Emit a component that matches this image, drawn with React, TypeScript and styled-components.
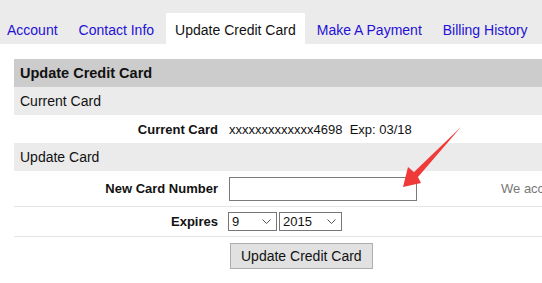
import React from "react";
import styled, { createGlobalStyle } from "styled-components";

const Global = createGlobalStyle`
  html, body {
    margin: 0;
    padding: 0;
    overflow: hidden;
    background: #ffffff;
    font-family: Arial, "Liberation Sans", Helvetica, sans-serif;
    color: #111;
  }
`;

const Page = styled.div`
  position: relative;
  width: 542px;
  height: 283px;
  overflow: hidden;
`;

const TabBar = styled.div`
  display: flex;
  align-items: flex-end;
  gap: 3px;
  height: 44px;
  background: #ebebeb;
  padding-left: 0;
  margin-left: -2px;
  white-space: nowrap;
`;

const Tab = styled.a<{ $active?: boolean }>`
  display: block;
  padding: 9px 9px 6px;
  font-size: 14px;
  line-height: 16px;
  text-decoration: none;
  color: ${(p) => (p.$active ? "#111" : "#2410d6")};
  background: ${(p) => (p.$active ? "#ffffff" : "transparent")};
  cursor: pointer;
`;

const Panel = styled.div`
  margin: 15px 0 0 14px;
  width: 640px;
`;

const Header = styled.div`
  height: 28px;
  display: flex;
  align-items: center;
  padding-left: 6px;
  background: #cccccc;
  font-weight: bold;
  font-size: 14.5px;
`;

const Section = styled.div`
  height: 28px;
  display: flex;
  align-items: center;
  padding-left: 6px;
  background: #ebebeb;
  font-size: 14px;
`;

const Field = styled.div<{ $h: number; $line?: boolean }>`
  display: grid;
  grid-template-columns: 210px 272px 1fr;
  align-items: center;
  height: ${(p) => p.$h}px;
  border-bottom: ${(p) => (p.$line ? "1px solid #e4e4e4" : "none")};
  font-size: 13px;
`;

const Label = styled.div`
  text-align: right;
  padding-right: 6px;
  font-weight: bold;
  font-size: 13px;
`;

const Value = styled.div`
  padding-left: 5px;
  display: flex;
  align-items: center;
  white-space: nowrap;
`;

const Note = styled.div`
  padding-left: 5px;
  color: #777;
  font-size: 13px;
  white-space: nowrap;
`;

const TextInput = styled.input`
  box-sizing: border-box;
  width: 188px;
  height: 24px;
  border: 1px solid #7a7a7a;
  padding: 0 3px;
  font: 13px Arial, "Liberation Sans", sans-serif;
  outline: none;
  margin: 0;
`;

const SelectWrap = styled.span<{ $w: number }>`
  position: relative;
  display: inline-block;
  width: ${(p) => p.$w}px;
  height: 19px;
  margin-right: 2px;
  &:first-child {
    margin-left: -1px;
  }
`;

const Select = styled.select`
  appearance: none;
  -webkit-appearance: none;
  box-sizing: border-box;
  width: 100%;
  height: 100%;
  border: 1px solid #767676;
  border-radius: 0;
  background: #fff;
  padding: 0 0 0 3px;
  margin: 0;
  font: 13px Arial, "Liberation Sans", sans-serif;
  color: #111;
  outline: none;
`;

const Chevron = styled.svg`
  position: absolute;
  right: 6px;
  top: 7px;
  pointer-events: none;
`;

const ButtonRow = styled.div`
  display: grid;
  grid-template-columns: 216px auto;
  padding-top: 6px;
`;

const Button = styled.button`
  grid-column: 2;
  justify-self: start;
  box-sizing: border-box;
  height: 26px;
  padding: 0 10px;
  background: #e1e1e1;
  border: 1px solid #adadad;
  border-radius: 0;
  font: 14px Arial, "Liberation Sans", sans-serif;
  color: #111;
  margin: 0;
`;

const Arrow = styled.svg`
  position: absolute;
  left: 0;
  top: 0;
  pointer-events: none;
`;

const ChevronIcon = () => (
  <Chevron width="9" height="5" viewBox="0 0 9 5">
    <path d="M0.5 0.5 L4.5 4.5 L8.5 0.5" fill="none" stroke="#555" strokeWidth="1" />
  </Chevron>
);

const tabs = ["Account", "Contact Info", "Update Credit Card", "Make A Payment", "Billing History"];

export default function App() {
  return (
    <Page>
      <Global />
      <TabBar>
        {tabs.map((t) => (
          <Tab key={t} $active={t === "Update Credit Card"}>
            {t}
          </Tab>
        ))}
      </TabBar>
      <Panel>
        <Header>Update Credit Card</Header>
        <Section>Current Card</Section>
        <Field $h={28}>
          <Label>Current Card</Label>
          <Value>xxxxxxxxxxxxx4698&nbsp;&nbsp;Exp: 03/18</Value>
        </Field>
        <Section>Update Card</Section>
        <Field $h={35} $line>
          <Label>New Card Number</Label>
          <Value>
            <TextInput type="text" />
          </Value>
          <Note>We accept Visa, MasterCard, Discover and American Express</Note>
        </Field>
        <Field $h={29} $line>
          <Label>Expires</Label>
          <Value>
            <SelectWrap $w={49}>
              <Select defaultValue="9">
                {Array.from({ length: 12 }, (_, i) => (
                  <option key={i} value={String(i + 1)}>
                    {i + 1}
                  </option>
                ))}
              </Select>
              <ChevronIcon />
            </SelectWrap>
            <SelectWrap $w={63}>
              <Select defaultValue="2015">
                {[2015, 2016, 2017, 2018, 2019, 2020, 2021, 2022].map((y) => (
                  <option key={y} value={String(y)}>
                    {y}
                  </option>
                ))}
              </Select>
              <ChevronIcon />
            </SelectWrap>
          </Value>
        </Field>
        <ButtonRow>
          <Button type="button">Update Credit Card</Button>
        </ButtonRow>
      </Panel>
      <Arrow width="542" height="283" viewBox="0 0 542 283">
        <polygon
          points="403,187 408,167 414,172 461,127 418,177 421,183"
          fill="#f03a3a"
        />
      </Arrow>
    </Page>
  );
}
